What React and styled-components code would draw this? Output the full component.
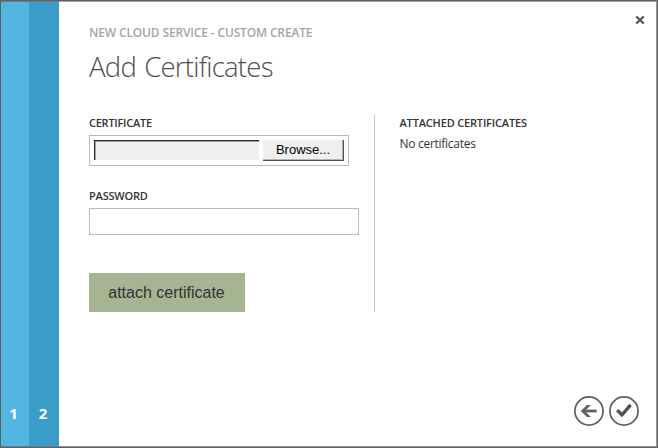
import React from "react";
import styled, { createGlobalStyle } from "styled-components";

const GlobalStyle = createGlobalStyle`
  * { box-sizing: border-box; }
  body { margin: 0; overflow: hidden; background: #fff; }
  button, input { font: inherit; border-radius: 0; outline: none; }
`;

const Dialog = styled.div`
  display: flex;
  width: 658px;
  height: 448px;
  background: #fff;
  border: 1px solid #5f5f5f;
  box-shadow: inset 0 1px 0 #a3a3a3, inset -1px -1px 0 #959595;
  color: #333;
  font-family: "Open Sans", "Noto Sans", sans-serif;
`;

const Step = styled.div`
  display: flex;
  align-items: flex-end;
  justify-content: center;
  width: ${(p) => p.$width}px;
  padding: 0 ${(p) => p.$inset}px 24px 0;
  background: ${(p) => p.$color};
  box-shadow: inset 0 1px 0 #63808d, inset 0 -1px 0 #63808d;
  color: #fff;
  font-size: 15px;
  font-weight: 700;
  line-height: 20px;
`;

const Content = styled.main`
  flex: 1;
  display: flex;
  flex-direction: column;
  padding: 0 18px 21px 30px;
`;

const Header = styled.header`
  display: flex;
  justify-content: space-between;
  height: 114px;
  padding-top: 23px;
`;

const Subtitle = styled.div`
  color: #a5a5a5;
  font-size: 12px;
  font-weight: 600;
  line-height: 18px;
  letter-spacing: -0.15px;
  white-space: nowrap;
`;

const Title = styled.h1`
  margin: 7px 0 0;
  color: #505050;
  font-size: 27.5px;
  font-weight: 300;
  line-height: 36px;
  letter-spacing: -0.75px;
  word-spacing: 1.8px;
  white-space: nowrap;
`;

const CloseButton = styled.button`
  display: flex;
  width: 10px;
  height: 10px;
  margin: -9px -6px 0 0;
  padding: 0;
  border: 0;
  background: none;
`;

const Columns = styled.div`
  display: flex;
  height: 197px;
`;

const Form = styled.form`
  display: flex;
  flex-direction: column;
  align-items: flex-start;
  width: 286px;
  border-right: 1px solid #c4c4c4;
`;

const Attached = styled.section`
  padding-left: 24.5px;
`;

const Label = styled.div`
  height: 20px;
  font-size: 11px;
  font-weight: 600;
  line-height: 16px;
  letter-spacing: ${(p) => p.$spacing}px;
  white-space: nowrap;
`;

const EmptyText = styled.div`
  margin-top: 1px;
  font-size: 12px;
  line-height: 16px;
  letter-spacing: -0.28px;
`;

const FilePicker = styled.div`
  display: flex;
  gap: 4px;
  width: 260px;
  height: 31px;
  margin-bottom: 22px;
  padding: 4px;
  border: 1px solid #bababa;
`;

const FileName = styled.div`
  width: 165px;
  height: 20px;
  background: #efefef;
  border-top: 1px solid #27282c;
  border-left: 1px solid #27282c;
  box-shadow: inset 1px 1px 0 #a0a0a0;
`;

const BrowseButton = styled.button`
  width: 81px;
  height: 21px;
  padding: 0;
  background: #efefef;
  border: 0 solid #4f4f54;
  border-width: 0 1px 1px 0;
  box-shadow: inset -1px -1px 0 #b5b5b5;
  color: #000;
  font-family: "Liberation Sans", Arial, sans-serif;
  font-size: 13px;
  line-height: 20px;
`;

const PasswordInput = styled.input`
  width: 270px;
  height: 27px;
  border: 1px solid #bababa;
  background: #fff;
`;

const AttachButton = styled.button`
  width: 156px;
  height: 39px;
  margin-top: 38px;
  padding: 0 1px 0 0;
  border: 0;
  background: #a6b491;
  color: #333;
  font-family: "Liberation Sans", Arial, sans-serif;
  font-size: 16px;
  line-height: 39px;
`;

const Footer = styled.footer`
  display: flex;
  justify-content: flex-end;
  gap: 5px;
  margin-top: auto;
`;

const RoundButton = styled.button`
  display: flex;
  width: 30px;
  height: 30px;
  padding: 0;
  border: 0;
  background: none;
`;

const CloseIcon = () => (
  <svg width="10" height="10" viewBox="0 0 10 10">
    <path d="M1.3 1.5L8.7 8.5M8.7 1.5L1.3 8.5" stroke="#575757" strokeWidth="2.4" />
  </svg>
);

const BackIcon = () => (
  <svg width="30" height="30" viewBox="0 0 30 30" fill="none">
    <circle cx="15" cy="15" r="14.1" stroke="#606060" strokeWidth="1.7" />
    <path d="M22.6 15H9" stroke="#606060" strokeWidth="2.8" />
    <path d="M6.8 15L13 9H17L10.8 15L17 21H13Z" fill="#606060" />
  </svg>
);

const DoneIcon = () => (
  <svg width="30" height="30" viewBox="0 0 30 30" fill="none">
    <circle cx="15" cy="15" r="14.1" stroke="#606060" strokeWidth="1.7" />
    <path d="M8.2 14.2L13 18.8L21.6 8.9" stroke="#505050" strokeWidth="3.3" />
  </svg>
);

export default function App() {
  return (
    <>
      <GlobalStyle />
      <Dialog>
        <Step $width={28} $inset={3} $color="#52b5e0">1</Step>
        <Step $width={30} $inset={2} $color="#3a9dc9">2</Step>
        <Content>
          <Header>
            <div>
              <Subtitle>NEW CLOUD SERVICE - CUSTOM CREATE</Subtitle>
              <Title>Add Certificates</Title>
            </div>
            <CloseButton aria-label="Close"><CloseIcon /></CloseButton>
          </Header>
          <Columns>
            <Form>
              <Label $spacing={-0.25}>CERTIFICATE</Label>
              <FilePicker>
                <FileName />
                <BrowseButton type="button">Browse...</BrowseButton>
              </FilePicker>
              <Label $spacing={-0.2}>PASSWORD</Label>
              <PasswordInput type="password" aria-label="Password" />
              <AttachButton type="button">attach certificate</AttachButton>
            </Form>
            <Attached>
              <Label $spacing={-0.17}>ATTACHED CERTIFICATES</Label>
              <EmptyText>No certificates</EmptyText>
            </Attached>
          </Columns>
          <Footer>
            <RoundButton aria-label="Back"><BackIcon /></RoundButton>
            <RoundButton aria-label="Complete"><DoneIcon /></RoundButton>
          </Footer>
        </Content>
      </Dialog>
    </>
  );
}
